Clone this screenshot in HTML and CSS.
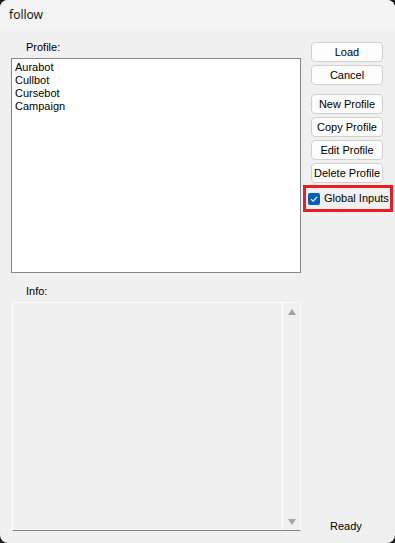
FILE: index.html
```html
<!DOCTYPE html>
<html lang="en">
<head>
    <meta charset="UTF-8">
    <title>follow</title>
    <link rel="stylesheet" href="styles.css">
</head>
<body>
    <div class="window">
        <div class="titlebar">follow</div>

        <div class="content">
            <div class="left">
                <div class="label">Profile:</div>
                <div class="listbox">
                    <div class="item">Aurabot</div>
                    <div class="item">Cullbot</div>
                    <div class="item">Cursebot</div>
                    <div class="item">Campaign</div>
                </div>

                <div class="label info-label">Info:</div>
                <div class="infobox">
                    <div class="info-text"></div>
                    <div class="scrollbar">
                        <span class="arrow up"></span>
                        <span class="arrow down"></span>
                    </div>
                </div>
            </div>

            <div class="right">
                <button class="btn">Load</button>
                <button class="btn">Cancel</button>
                <button class="btn group-start">New Profile</button>
                <button class="btn">Copy Profile</button>
                <button class="btn">Edit Profile</button>
                <button class="btn">Delete Profile</button>

                <label class="check-row">
                    <span class="check">
                        <svg width="12" height="12" viewBox="0 0 12 12">
                            <path d="M3 6.2 L5 8.2 L9.2 3.8" fill="none" stroke="#fff" stroke-width="1.1"/>
                        </svg>
                    </span>
                    Global Inputs
                </label>

                <div class="status">Ready</div>
            </div>
        </div>
    </div>
</body>
</html>
```

FILE: styles.css
```css
* {
    box-sizing: border-box;
}

body {
    margin: 0;
    background: #1c1c1c;
}

.window {
    width: 395px;
    height: 543px;
    background: #f0f0f0;
    border-radius: 8px;
    overflow: hidden;
    display: flex;
    flex-direction: column;
    font-family: "Liberation Sans", Arial, sans-serif;
    font-size: 11px;
    line-height: 13px;
    color: #000;
}

.titlebar {
    height: 30px;
    line-height: 30px;
    padding-left: 9px;
    background: #f3f3f3;
    font-family: "Noto Sans", "Liberation Sans", sans-serif;
    font-size: 12px;
    color: #1a1a1a;
}

.content {
    flex: 1;
    display: flex;
    padding-left: 11px;
    padding-bottom: 12px;
}

.left {
    width: 290px;
    display: flex;
    flex-direction: column;
}

.label {
    height: 13px;
    padding-left: 15px;
    margin-top: 11px;
    margin-bottom: 4px;
}

.info-label {
    margin-top: 12px;
}

.listbox {
    height: 215px;
    border: 1px solid #828790;
    background: #fff;
    padding: 2px 3px;
}

.item {
    height: 13px;
}

.infobox {
    flex: 1;
    width: 289px;
    margin-left: 1px;
    display: flex;
    border-top: 1px solid #fbfbfb;
    border-left: 1px solid #fff;
    border-right: 1px solid #fbfbfb;
    border-bottom: 1px solid #858585;
}

.info-text {
    flex: 1;
}

.scrollbar {
    width: 18px;
    border-left: 1px solid #fff;
    display: flex;
    flex-direction: column;
    justify-content: space-between;
    align-items: center;
    padding: 6px 0 5px;
}

.arrow {
    width: 0;
    height: 0;
    border-left: 4px solid transparent;
    border-right: 4px solid transparent;
}

.arrow.up {
    border-bottom: 6px solid #a3a3a3;
}

.arrow.down {
    border-top: 6px solid #a3a3a3;
}

.right {
    width: 72px;
    margin-left: 10px;
    padding-top: 12px;
    display: flex;
    flex-direction: column;
}

.btn {
    height: 20px;
    margin: 0 0 3px;
    padding: 0;
    border: 1px solid #d0d0d0;
    border-radius: 4px;
    background: #fdfdfd;
    font-family: inherit;
    font-size: 11px;
    color: #000;
}

.group-start {
    margin-top: 6px;
}

.check-row {
    display: flex;
    align-items: center;
    gap: 4px;
    width: 90px;
    height: 27px;
    margin-left: -8px;
    margin-top: -1px;
    padding-left: 2px;
    border: 3px solid #ec1c24;
    white-space: nowrap;
}

.check {
    width: 12px;
    height: 12px;
    border-radius: 2px;
    background: #005fb8;
    display: flex;
}

.status {
    margin-top: auto;
    margin-bottom: -2px;
    padding-left: 19px;
}
```
